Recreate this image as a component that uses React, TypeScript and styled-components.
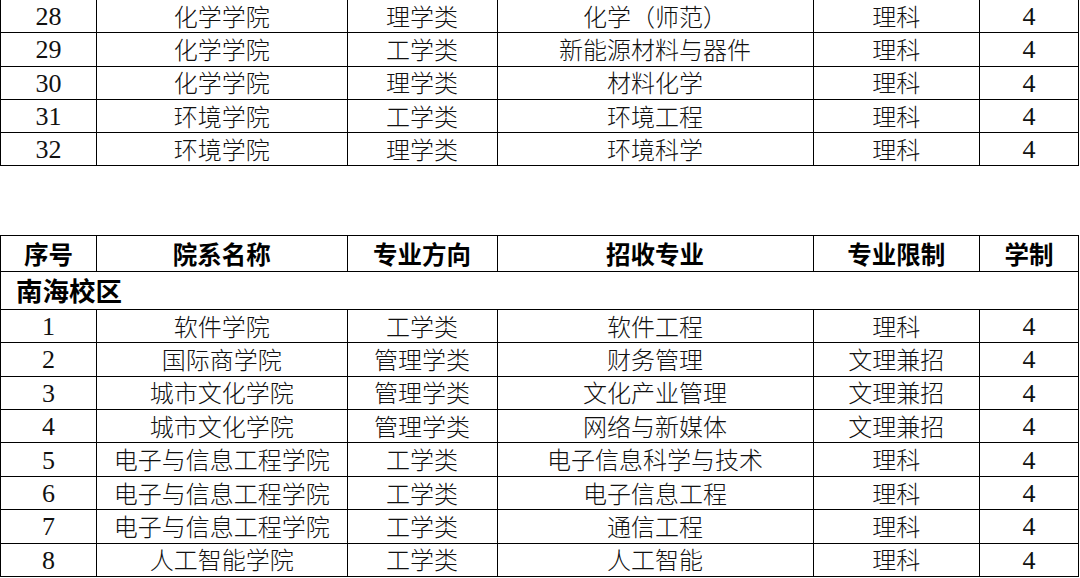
import React from "react";
import styled, { createGlobalStyle } from "styled-components";

const Global = createGlobalStyle`
  html, body { margin: 0; padding: 0; background: #fff; }
  body { width: 1080px; height: 578px; overflow: hidden; }
`;

const Page = styled.div`
  width: 1080px;
  height: 578px;
  overflow: hidden;
  display: flex;
  flex-direction: column;
  background: #fff;
`;

const Table = styled.table<{ $top?: number }>`
  width: 1078px;
  table-layout: fixed;
  border-collapse: collapse;
  margin-top: ${(p) => p.$top ?? 0}px;
  color: #111;
  font-family: "Liberation Serif", "Noto Sans CJK SC", serif;
  font-size: 24px;
  font-weight: 300;
`;

const Row = styled.tr<{ $h: number }>`
  height: ${(p) => p.$h}px;
`;

const Cell = styled.td<{ $num?: boolean }>`
  border: 1.4px solid #000;
  padding: ${(p) => (p.$num ? "2px 0 0" : "3px 0 0")};
  text-align: center;
  vertical-align: middle;
  line-height: 1;
  white-space: nowrap;
  font-size: ${(p) => (p.$num ? "26px" : "24px")};
`;

const HeadCell = styled.th`
  border: 1.4px solid #000;
  padding: 2px 0 0;
  text-align: center;
  vertical-align: middle;
  line-height: 1;
  white-space: nowrap;
  font-family: "Noto Sans CJK SC", sans-serif;
  font-size: 24.5px;
  font-weight: 700;
  color: #000;
`;

const CampusCell = styled.td`
  border: 1.4px solid #000;
  padding: 0 0 0 15px;
  text-align: left;
  vertical-align: middle;
  line-height: 1;
  font-family: "Noto Sans CJK SC", sans-serif;
  font-size: 26.5px;
  font-weight: 700;
  color: #000;
`;

const widths = [96, 250.5, 150, 316, 166.5, 99];

const Cols = () => (
  <colgroup>
    {widths.map((w, i) => (
      <col key={i} style={{ width: w }} />
    ))}
  </colgroup>
);

const top = [
  ["28", "化学学院", "理学类", "化学（师范）", "理科", "4"],
  ["29", "化学学院", "工学类", "新能源材料与器件", "理科", "4"],
  ["30", "化学学院", "理学类", "材料化学", "理科", "4"],
  ["31", "环境学院", "工学类", "环境工程", "理科", "4"],
  ["32", "环境学院", "理学类", "环境科学", "理科", "4"],
];

const nanhai = [
  ["1", "软件学院", "工学类", "软件工程", "理科", "4"],
  ["2", "国际商学院", "管理学类", "财务管理", "文理兼招", "4"],
  ["3", "城市文化学院", "管理学类", "文化产业管理", "文理兼招", "4"],
  ["4", "城市文化学院", "管理学类", "网络与新媒体", "文理兼招", "4"],
  ["5", "电子与信息工程学院", "工学类", "电子信息科学与技术", "理科", "4"],
  ["6", "电子与信息工程学院", "工学类", "电子信息工程", "理科", "4"],
  ["7", "电子与信息工程学院", "工学类", "通信工程", "理科", "4"],
  ["8", "人工智能学院", "工学类", "人工智能", "理科", "4"],
];

const heads = ["序号", "院系名称", "专业方向", "招收专业", "专业限制", "学制"];

const isNum = (i: number) => i === 0 || i === 5;

export default function App() {
  return (
    <Page>
      <Global />
      <Table $top={-1}>
        <Cols />
        <tbody>
          {top.map((r) => (
            <Row key={r[0]} $h={33.3}>
              {r.map((c, i) => (
                <Cell key={i} $num={isNum(i)}>
                  {c}
                </Cell>
              ))}
            </Row>
          ))}
        </tbody>
      </Table>
      <Table $top={69}>
        <Cols />
        <thead>
          <Row $h={35.4}>
            {heads.map((h) => (
              <HeadCell key={h}>{h}</HeadCell>
            ))}
          </Row>
        </thead>
        <tbody>
          <Row $h={38}>
            <CampusCell colSpan={6}>南海校区</CampusCell>
          </Row>
          {nanhai.map((r) => (
            <Row key={r[0]} $h={33.4}>
              {r.map((c, i) => (
                <Cell key={i} $num={isNum(i)}>
                  {c}
                </Cell>
              ))}
            </Row>
          ))}
        </tbody>
      </Table>
    </Page>
  );
}
